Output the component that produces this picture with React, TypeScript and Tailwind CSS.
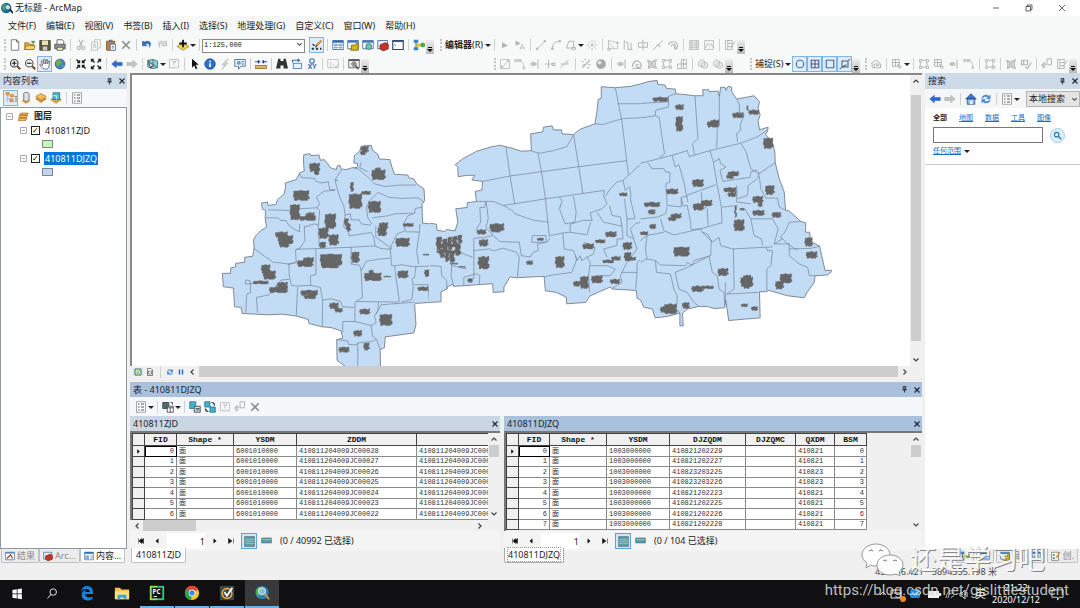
import type { ReactNode } from 'react';
import clsx from 'clsx';

const G = '#b4b4b4';
const K = '#444';
const B = '#2f6fb8';

const icons: Record<string, ReactNode> = {
  new: <path d="M3 1h7l3 3v11H3zM10 1v3h3" fill="#fff" stroke="#555" />,
  open: <><path d="M1 5h5l1 2h6v7H1z" fill="#d9a93a" stroke="#8a6a1c" /><path d="M3 9h12l-2 5H1z" fill="#f7d777" stroke="#8a6a1c" /><path d="M9 3h4l-1-2 3 3-3 2" fill="#3c8a3c" /></>,
  save: <><path d="M1 2h14v13H1z" fill="#5a5a3c" stroke="#3c3c28" /><path d="M4 2h8v6H4z" fill="#e9e3b4" /><path d="M5 10h6v5H5z" fill="#ccc" /></>,
  print: <><path d="M4 7V1h7l2 2v4" fill="#fff" stroke={K} /><path d="M1 7h14v6H1z" fill="#8f9499" stroke={K} /><path d="M4 11h8v4H4z" fill="#f3f0c0" stroke={K} /></>,
  cut: <path d="M5 1l5 9M11 1L6 10M5 10a2 2 0 1 0 .1 4 2 2 0 0 0 0-4M11 10a2 2 0 1 0 .1 4 2 2 0 0 0 0-4" fill="none" stroke={G} strokeWidth="1.5" />,
  copy: <path d="M2 4h8v11H2zM6 4V1h8v11h-4M4 7h4M4 9h4M4 11h4" fill="none" stroke={G} />,
  paste: <><path d="M2 3h11v12H2z" fill="#b5814a" stroke="#765026" /><path d="M5 1h5v3H5z" fill="#777" /><path d="M7 7h7v8H7z" fill="#fff" stroke="#3f6aa5" /><path d="M9 10h3M9 12h3" stroke="#3f6aa5" /></>,
  del: <path d="M3 3l10 10M13 3L3 13" stroke="#8d8d8d" strokeWidth="2.2" />,
  undo: <path d="M2 3v6h6L6 7c3-2 6-1 5 4 4-6 0-10-6-7z" fill={B} stroke={B} />,
  redo: <path d="M14 3v6H8l2-2c-3-2-6-1-5 4-4-6 0-10 6-7z" fill="#ddd" stroke={G} />,
  add: <><path d="M8 5l8 5-8 5-8-5z" fill="#efd45b" stroke="#9a8328" /><path d="M8 1v10M3 6h10" stroke="#111" strokeWidth="2.4" /></>,
  edit: <><path d="M1 13h13" stroke="#333" strokeWidth="2.500" strokeDasharray="3 2.500" /><path d="M2 7l3 2" stroke="#222" fill="none" strokeWidth="1.5" /><path d="M7 9l7-7" stroke="#d58d34" strokeWidth="2.6" /><path d="M6 11l2-3" stroke="#333" strokeWidth="1.500" /></>,
  table: <><path d="M1 2h14v12H1z" fill="#fff" stroke="#2f568c" /><path d="M1 2h14v3H1z" fill="#2f6fb8" /><path d="M3 7h4v2H3zM9 7h4v2H9zM3 11h4v1H3zM9 11h4v1H9z" fill="#8fb4de" stroke="#6f9bd1" /></>,
  catalog: <><path d="M1 2h14v11H1z" fill="#fff" stroke="#2f568c" /><path d="M1 2h14v3H1z" fill="#4a7bbd" /><path d="M6 8h6v-2h3v9H5z" fill="#d6b422" stroke="#6f5c10" /></>,
  find: <><path d="M1 2h14v11H1z" fill="#fff" stroke="#2f568c" /><path d="M1 2h14v3H1z" fill="#4a7bbd" /><circle cx="9" cy="10" r="4" fill="#6fc0b5" stroke="#2b7469" /></>,
  toolbox: <><path d="M1 2h13v11H1z" fill="#e8eefc" stroke="#2f568c" /><path d="M4 8l7-3 4 2v6l-7 3-4-3z" fill="#c23426" stroke="#7e1b12" /></>,
  python: <><path d="M1 2h14v12H1z" fill="#fff" stroke="#333c66" strokeWidth="1.5" /><path d="M1 3h14" stroke="#3c5aa0" strokeWidth="2" /><path d="M3 7l2 2" stroke="#333" /></>,
  model: <><path d="M4 4v8M4 8h8" stroke="#333" /><rect x="1" y="1" width="6" height="4" fill="#2f87c7" /><rect x="1" y="11" width="6" height="4" fill="#2f87c7" /><circle cx="7" cy="8" r="2.5" fill="#e2c52e" /><rect x="10" y="5" width="6" height="6" rx="2" fill="#56a646" /></>,
  zoomin: <><circle cx="7" cy="7" r="5" fill="#f4f8fb" stroke="#333" strokeWidth="1.5" /><path d="M11 11l4 4" stroke="#7a4a1a" strokeWidth="2.5" /><path d="M4 7h6M7 4v6" stroke="#222" strokeWidth="1.6" /></>,
  zoomout: <><circle cx="7" cy="7" r="5" fill="#f4f8fb" stroke="#555" strokeWidth="1.5" /><path d="M11 11l4 4" stroke="#7a4a1a" strokeWidth="2.5" /><path d="M4 7h6" stroke="#222" strokeWidth="1.6" /></>,
  pan: <path d="M5 14L1 9l1-1 3 2L3 4l1.500-.5L7 8 6 2l2-.5L9 8l1-6 1.500.5L11.500 8 13 4l1.500.5L13 12l-2 3z" fill="#fff" stroke="#555" />,
  globe: <><circle cx="8" cy="8" r="6.500" fill="#3c86c8" stroke="#27517c" /><path d="M4 3c4-2 7 1 6 4s-4 1-4 5c-3-2-5-6-2-9M11 9l3 1-3 4z" fill="#6fae4c" /></>,
  shrink: <path d="M2 2l4 4M6 3v3H3M14 2l-4 4M10 3v3h3M2 14l4-4M3 10h3v3M14 14l-4-4M13 10h-3v3" stroke="#222" fill="none" strokeWidth="1.8" />,
  grow: <path d="M6 6L2 2M2 5V2h3M10 6l4-4M11 2h3v3M6 10l-4 4M2 11v3h3M10 10l4 4M14 11v3h-3" stroke="#222" fill="none" strokeWidth="1.8" />,
  back: <path d="M1 8l6-5v3h8v4H7v3z" fill="#2c6cd0" stroke="#1b4796" strokeWidth=".6" />,
  fwd: <path d="M15 8L9 3v3H1v4h8v3z" fill="#c2c2c2" stroke="#a5a5a5" strokeWidth=".6" />,
  selfeat: <><path d="M1 3l7-1 6 2v9l-6 1-7-2z" fill="#8fd0dd" stroke="#36606b" /><path d="M8 2v6l6 5M1 8h7" stroke="#36606b" fill="none" /><path d="M2 4l7 7-3 0-1 3z" fill="#fff" stroke="#222" /></>,
  clearsel: <path d="M2 2h12v11H2zM5 5h6M8 5v5M11 3l-3 4" fill="none" stroke={G} />,
  pointer: <path d="M4 1l9 8H9l2 5-2 1-2-5-3 3z" fill="#111" />,
  info: <><circle cx="8" cy="8" r="7" fill="#2a6fc9" stroke="#1b4a8b" /><path d="M8 7v5M8 3.500v2" stroke="#fff" strokeWidth="2.2" /></>,
  flash: <path d="M12 1L4 9h4l-4 6 8-8H8z" fill="#ddd" stroke={G} />,
  popup: <><path d="M1 2h14v9H9l-3 4v-4H1z" fill="#eaf3fc" stroke="#36597f" /><path d="M5 5h3v3H5zM10 5h3M10 8h3" fill="none" stroke={B} strokeWidth="1.3" /></>,
  measure: <><path d="M0 10h16v4H0z" fill="#ddb46a" stroke="#8b6626" /><path d="M0 5h6M4 3l2 2-2 2M16 5h-6M12 3l-2 2 2 2" fill="none" stroke="#26509a" strokeWidth="1.600" /></>,
  binoc: <path d="M3 1h3v3h4V1h3l3 13h-6v-4H6v4H0z" fill="#333" />,
  route: <><rect x="3" y="7" width="11" height="7" fill="#e7f1fa" stroke={B} /><path d="M2 6V3h9l-2-2M11 3L9 5" fill="none" stroke={B} strokeWidth="1.500" /></>,
  xy: <><circle cx="8" cy="4" r="3" fill="#fff" stroke={B} strokeWidth="1.500" /><text x="8" y="15" fontSize="9" fontWeight="700" fill={B} textAnchor="middle">XY</text></>,
  clock: <path d="M1 2h14v11H1zM5 5v8M8 8l4 5 3-5" fill="none" stroke={G} />,
  viewer: <><path d="M1 2h14v11H1z" fill="#f5f5f5" stroke="#444" /><path d="M1 3h14" stroke="#555" strokeWidth="2" /><circle cx="8" cy="8" r="3" fill="#fff" stroke="#333" /><path d="M8 6v4M6 8h4" stroke="#333" /><path d="M10 10l4 5" stroke="#555" strokeWidth="2" /></>,
  gTri: <path d="M4 4l8 5-8 3z" fill={G} />,
  gTriA: <><path d="M2 2l7 4-7 3z" fill={G} /><path d="M8 14l3-7 3 7M9 12h4" stroke={G} fill="none" /></>,
  gLine: <path d="M3 13L13 3M2 12h2v2H2zM12 2h2v2h-2z" fill={G} stroke={G} />,
  gArc: <path d="M3 14C3 7 6 3 13 3M2 12h2v2H2zM12 2h2v2h-2z" fill="none" stroke={G} strokeWidth="1.3" />,
  gTrap: <path d="M2 12L5 3h7l-1 9zM10 11h4v3h-4z" fill="none" stroke={G} strokeWidth="1.3" />,
  gStar: <path d="M8 1v14M1 8h14M3 3l10 10M13 3L3 13" stroke={G} strokeDasharray="4 1.500" />,
  gReshape: <path d="M2 2v11h12V5zM2 5l8 8M1 12h3v3H1zM13 4h2v2h-2z" fill="none" stroke={G} />,
  gCutp: <path d="M3 2v12M3 3l5 2v9M12 5v9M8 14h6" fill="none" stroke={G} strokeWidth="1.300" />,
  gSplit: <path d="M2 5h12v6H2zM8 1v14" fill="none" stroke={G} strokeWidth="1.300" />,
  gSlash: <path d="M2 14L14 2M6 8h4v3" fill="none" stroke={G} strokeWidth="1.300" />,
  gRotate: <path d="M2 8a6 5 0 1 1 9 5M14 13h-4M10 13V9M6 10a2.500 2 0 1 1 4 1" fill="none" stroke={G} strokeWidth="1.500" />,
  gGrid: <path d="M2 2h12v12H2zM2 5h12M2 8h12M2 11h12M5 2v12M11 2v12" fill="#eee" stroke={G} />,
  gMount: <path d="M2 2h12v12H2zM3 12l3-6 3 3 2-3 3 6" fill="#f4f4f4" stroke={G} />,
  gForm: <path d="M2 2h9v12H2zM5 2v12M5 6h6M5 10h6M9 12l6-9" fill="none" stroke={G} strokeWidth="1.200" />,
  gBoxLine: <path d="M2 2h12v12H2zM4 12l8-8M3 11h2v2H3zM11 3h2v2h-2z" fill="none" stroke={G} />,
  gCorner: <path d="M2 3h5c4 0 6 4 6 10M1 2h3v3H1zM6 2h3v3H6zM12 12h2v2h-2z" fill="none" stroke={G} />,
  gExt: <path d="M1 8h8M12 2v12M9 6v4M4 6h3v4H4z" fill="none" stroke={G} strokeWidth="1.300" />,
  gPlus: <path d="M6 2v12M1 8h12M11 7h4v3h-4z" fill="none" stroke={G} strokeWidth="1.200" />,
  gBranch: <path d="M2 13L13 2M2 8h10M10 6l3 2" fill="none" stroke={G} strokeWidth="1.200" />,
  gDots: <path d="M3 13L13 3M2 5h3M6 2h2M11 9h3M9 13h3M4 9h2" stroke={G} strokeWidth="1.500" />,
  gBall: <><circle cx="8" cy="8" r="6.500" fill="#a9a9a9" /><circle cx="6" cy="6" r="2.500" fill="#e5e5e5" /></>,
  gCurl: <path d="M2 12c0-7 6-11 10-6s-1 8-4 6 0-5 2-3M2 14h12" fill="none" stroke={G} strokeWidth="1.600" />,
  gPoly: <path d="M2 3l5 2 7-3-2 6 2 6-6-2-5 2 1-6zM4 4l8 9M12 4l-8 8" fill="#ddd" stroke={G} strokeWidth="1.300" />,
  gBoxes: <path d="M2 2h3v3H2zM11 2h3v3h-3zM2 11h3v3H2zM11 11h3v3h-3zM5 3h6M5 12h6M3 5v6M12 5v6" fill="none" stroke={G} strokeWidth="1.200" />,
  gTiles: <path d="M7 2h7v6H7zM2 8h12v6H2zM7 8v6M10 2v12" fill="none" stroke={G} strokeWidth="1.200" />,
  gUnion: <path d="M2 5l4-3 4 2v6l-4 2-4-2zM6 8l4-3 4 2v5l-4 2-4-2z" fill="#e8e8e8" stroke={G} />,
  gHouse: <path d="M1 8l6-5 6 3M3 7v6h11V8H6v5M8 10h4" fill="none" stroke={G} strokeWidth="1.300" />,
  gTopo: <path d="M2 2h9v9H2zM2 6h9M6 2v9M9 8l5 4-3 2z" fill="none" stroke={G} strokeWidth="1.300" />,
  gCheck: <path d="M2 3h8v6H2zM5 3v6M7 12l3 2 5-8" fill="none" stroke={G} strokeWidth="1.600" />,
  sCircle: <circle cx="8" cy="8" r="5" fill="none" stroke="#4b6b94" strokeWidth="1.500" />,
  sGrid: <path d="M3 3h10v10H3zM8 3v10M3 8h10" fill="none" stroke="#4b5f80" strokeWidth="1.500" />,
  sBox: <path d="M3 3h10v10H3z" fill="none" stroke="#4b6b94" strokeWidth="1.500" />,
  sEdge: <path d="M4 4h8v8H4zM1 15l3-3M12 4l3-3M4 12l6-3" fill="none" stroke="#4b5f80" strokeWidth="1.400" />,
  listOrder: <><path d="M3 3v10M3 5h5M3 9h5M7 13h5" stroke="#aaa" fill="none" /><path d="M1 1l4-1 1 3-4 1zM7 4l4-1 1 3-4 1zM6 10l4-1 1 3-4 1z" fill="#e3a45a" stroke="#c58438" /><path d="M13 6h3M13 9h3M13 12h3" stroke="#555" /></>,
  listSource: <><path d="M2 12l6-4 6 4-6 4z" fill="#e9a63d" /><path d="M5 2c0-2 7-2 7 0v9c0 2-7 2-7 0z" fill="#dde1e6" stroke="#555" /></>,
  listVis: <><path d="M1 9l7-4 7 4-7 5z" fill="#d8963a" stroke="#b07a24" /><path d="M1 6l7-4 7 4-7 5z" fill="#f3bd63" stroke="#b07a24" /></>,
  listSel: <><path d="M1 10l7-3 7 3-7 5z" fill="#e9a63d" stroke="#b07a24" /><path d="M4 1h9v9H4z" fill="#42b7d0" stroke="#27687b" /><path d="M4 5h5v5" stroke="#fff" fill="none" /></>,
  options: <><path d="M2 1h12v14H2z" fill="#fff" stroke="#888" /><path d="M4 4h2M4 8h2M4 12h2M8 4h4M8 8h4M8 12h4" stroke="#555" strokeWidth="1.500" /></>,
  layers: <path d="M4 3h11l-2 3H2zM3 6h11l-2 4H1zM2 10h11l-2 4H0z" fill="#f0b557" stroke="#a8702a" />,
  home: <><path d="M1 8l7-7 7 7z" fill="#3c78cc" stroke="#1c4685" /><path d="M3 8h10v7H3z" fill="#8fb9ea" stroke="#1c4685" /><path d="M7 10h3v5H7z" fill="#fff" /></>,
  refresh: <path d="M2 7c1-5 7-6 10-3l2-2v6H8l2-2C8 4 5 5 4 7zM14 9c-1 5-7 6-10 3l-2 2V8h6l-2 2c2 2 5 1 6-1z" fill="#4b90d8" />,
  related: <><path d="M1 2h8v8H1z" fill="#4a6d74" stroke="#333" /><path d="M7 7h8v8H7z" fill="#fff" stroke="#333" /><path d="M7 9h8M11 9v6M11 2h3v3" stroke="#333" fill="none" /></>,
  selby: <><path d="M1 1h8v9H1z" fill="#3fb4cf" stroke="#276a80" /><path d="M7 7h8v8H7z" fill="#cfe2ea" stroke="#333" /><path d="M9 10h5M9 12h5" stroke="#333" /></>,
  swsel: <><path d="M1 1h7v7H1zM8 8h7v7H8z" fill="#3fb4cf" stroke="#276a80" /><path d="M10 2c3 0 4 1 4 4M2 10c0 3 1 4 4 4" stroke="#222" fill="none" strokeWidth="1.500" /></>,
  gZoomSel: <path d="M8 1h6v8H8zM6 7a3 3 0 1 0 .1 5M1 9h6M4 6v6M2 14l2-2" fill="none" stroke={G} strokeWidth="1.300" />,
  pin: <path d="M5 1h6v7H5zM9 1v7M3 9h10M8 9v6" fill="none" stroke="#1c2733" strokeWidth="1.900" />,
  close: <path d="M3 3l10 10M13 3L3 13" stroke="#1c2733" strokeWidth="2.300" />,
  thinClose: <path d="M2 2l12 12M14 2L2 14" stroke="#222" strokeWidth="1.400" />,
  min: <path d="M2 8h12" stroke="#222" strokeWidth="1.400" />,
  max: <path d="M2 5h9v9H2zM5 5V2h9v9h-3" fill="none" stroke="#222" strokeWidth="1.400" />,
  up: <path d="M3 11l5-5 5 5" fill="none" stroke="#444" strokeWidth="2.400" />,
  down: <path d="M3 5l5 5 5-5" fill="none" stroke="#444" strokeWidth="2.400" />,
  left: <path d="M11 3L6 8l5 5" fill="none" stroke="#444" strokeWidth="2.400" />,
  right: <path d="M5 3l5 5-5 5" fill="none" stroke="#444" strokeWidth="2.400" />,
  first: <path d="M3 3v10M13 3v10L6 8zM9 3v10L4 8z" fill="#111" stroke="#111" />,
  prev: <path d="M11 3v10L5 8z" fill="#111" />,
  next: <path d="M5 3v10l6-5z" fill="#111" />,
  last: <path d="M13 3v10M3 3v10l7-5z" fill="#111" stroke="#111" />,
  allrec: <><path d="M1 1h14v14H1z" fill="#57a0a8" stroke="#4d5e63" /><path d="M1 5h14M1 8h14M1 11h14" stroke="#a9cdd2" /></>,
  selrec: <><path d="M1 3h14v7H1z" fill="#4fa3ae" stroke="#4d5e63" /><path d="M1 5h14" stroke="#a9cdd2" /></>,
  dataview: <><path d="M2 2h12v12H2z" fill="#cfe5b8" stroke="#2f5a3c" strokeWidth="1.500" /><path d="M5 8l2 3 4-6" fill="none" stroke="#3c7a3c" /></>,
  layoutview: <path d="M3 1h7l3 3v11H3zM5 6h6v6H5z" fill="#fff" stroke="#444" strokeWidth="1.300" />,
  pause: <path d="M5 3v10M11 3v10" stroke={B} strokeWidth="3" />,
  results: <><path d="M1 2h14v12H1z" fill="#fff" stroke="#2f568c" /><path d="M1 3h14" stroke="#4a7bbd" strokeWidth="2" /><path d="M3 12l6-6 3 6" stroke="#9c4a2c" fill="none" strokeWidth="2" /></>,
  contents: <><path d="M1 2h14v12H1z" fill="#fff" stroke="#2f568c" /><path d="M1 3h14" stroke="#2f6fb8" strokeWidth="3" /><path d="M2 7h6v6H2z" fill="#79aee6" /><path d="M10 8h4M10 11h4" stroke="#555" /></>,
  create: <><path d="M1 2h11v13H1z" fill="#fff" stroke="#555" /><path d="M3 5h3v3H3z" fill="#5aa05a" /><path d="M3 10h3v3H3z" fill="#4a7bbd" /><path d="M8 11l6-9" stroke="#d58d34" strokeWidth="2.400" /></>,
  search: <><circle cx="6.500" cy="6.500" r="4" fill="none" stroke="#2779b8" strokeWidth="2" /><path d="M9.500 9.500l5 5" stroke="#2779b8" strokeWidth="2.400" /></>,
};

const Icon = ({ name, className = 'w-[12px] h-[12px]' }: { name: string; className?: string }) => (
  <svg viewBox="0 0 16 16" className={clsx('shrink-0', className)} aria-hidden="true">{icons[name]}</svg>
);

const Tool = ({ name, active }: { name: string; active?: boolean }) => (
  <button
    aria-label={name}
    className={clsx('flex h-[16px] w-[15px] shrink-0 items-center justify-center', active && 'border border-[#7db7ea] bg-[#dcecfa]')}
  >
    <Icon name={name} />
  </button>
);

const Sep = () => <span className="mx-[2px] h-3 w-[2px] shrink-0 border-r border-[#d0d0d0]" />;
const Grip = () => <span className="mx-px h-3 w-[2px] shrink-0 border-l-2 border-dotted border-[#c4c4c4]" />;
const Caret = () => (
  <svg viewBox="0 0 6 6" className="h-[6px] w-[6px] shrink-0" aria-hidden="true"><path d="M0 2h6L3 5z" fill="#222" /></svg>
);
const More = () => (
  <button aria-label="more" className="flex h-[14px] w-2 shrink-0 items-end justify-center self-end bg-gradient-to-b from-[#eeeeee] to-[#b9b9b9] pb-px">
    <svg viewBox="0 0 6 6" className="h-[6px] w-[6px]"><path d="M1 0h4v1H1zM0 2h6L3 5z" fill="#111" /></svg>
  </button>
);

// '|' separator, 'v' drop-down caret, '*name' pressed button
const Tools = ({ items }: { items: string }) => (
  <>
    {items.split(' ').map((it, idx) => {
      if (it === '|') return <Sep key={idx} />;
      if (it === 'v') return <Caret key={idx} />;
      return <Tool key={idx} name={it.replace('*', '')} active={it.startsWith('*')} />;
    })}
  </>
);

const menus = ['文件(F)', '编辑(E)', '视图(V)', '书签(B)', '插入(I)', '选择(S)', '地理处理(G)', '自定义(C)', '窗口(W)', '帮助(H)'];

// settlement block with small notches along its sides
const blob = ([x, y, w, h]: number[]) => {
  const n = Math.min(2 + ((x + y) % 2), h * 0.15);
  const m = Math.min(3 + (x % 3), h * 0.2);
  const r = x + w;
  const b = y + h;
  return `M${x} ${y + n}H${x + w * 0.35}V${y}H${x + w * 0.6}V${y + n}H${r - m}V${y}H${r}V${y + h * 0.35}h${-n}V${y + h * 0.6}H${r + 1}V${b - m}H${r - m}V${b}H${x + w * 0.45}v${-n}H${x + w * 0.25}V${b}H${x + n}V${y + h * 0.65}H${x - 1}V${y + h * 0.4}h${n}z`;
};

const regions = [
  {
    offset: 'translate(252 165)',
    fill: 'M648 280V515L604 518 600 520 604 580 598 606 512 618 510 650 497 656 498 706H392L368 688 367 626 385 622 380 600 350 590 324 588 284 578 282 566 248 556 205 550 165 552 84 548 82 530 62 528 58 472 28 468 25 428 50 428 50 412 65 408 65 398 92 395 92 380 116 377 120 350 118 328 126 315 140 300 157 290 153 262 155 240 145 236 142 218 160 215 162 225 185 222 190 208 210 190 214 170 213 158 232 152 246 148 256 128 270 122 268 98 268 74 287 70 290 76 314 74 318 90 330 88 340 100 348 112 366 118 368 108 376 104 380 116 395 118 414 112 428 112 430 100 418 98 420 76 436 62 440 48 470 45 474 60 490 72 494 86 526 88 532 110 540 132 580 134 582 142 598 146 606 160 628 176 630 210 622 222 624 278z',
    edge: 'M645 515L604 518 600 520 604 580 598 606 512 618 510 650 497 656 498 706M392 706L368 688 367 626 385 622 380 600 350 590 324 588 284 578 282 566 248 556 205 550 165 552 84 548 82 530 62 528 58 472 28 468 25 428 50 428 50 412 65 408 65 398 92 395 92 380 116 377 120 350 118 328 126 315 140 300 157 290 153 262 155 240 145 236 142 218 160 215 162 225 185 222 190 208 210 190 214 170 213 158 232 152 246 148 256 128 270 122 268 98 268 74 287 70 290 76 314 74 318 90 330 88 340 100 348 112 366 118 368 108 376 104 380 116 395 118 414 112 428 112 430 100 418 98 420 76 436 62 440 48 470 45 474 60 490 72 494 86 526 88 532 110 540 132 580 134 582 142 598 146 606 160 628 176 630 210 622 222 624 278 645 280',
    lines: 'M256 130L262 142 300 144 304 152 320 158 342 154 346 178 362 178M155 262L190 262 200 270 215 270 224 284 240 296 256 304V280M162 238L224 240 232 236 308 232 316 220 306 200 330 182 362 180M362 150H370L362 148 382 118M362 150L370 180 376 200 388 225 392 250M414 112L432 116 460 140 480 160 510 168 560 164 604 164M440 96L436 112 460 124M490 186L505 192 520 200 560 204 610 202 628 215M490 186L466 210 456 230 460 262 472 280M472 262L520 256 540 250 600 248 602 234 622 230M392 250L388 290 402 300 404 316 470 306 478 320 482 346M392 254L408 250 410 268 434 268 440 280 470 284M308 232L316 240 312 290 315 350M270 290L300 280 312 284M270 286L272 330 258 352M118 352L150 376 175 394 222 400 246 396 244 358 258 352M246 356L310 354 410 350 480 346 500 354 530 356M305 356V432L288 436 290 464 246 466 232 464 225 435 224 398M530 356V345L548 310 572 300 568 278 580 256 600 248M484 286V320L526 350 530 384 530 405 540 405M572 304H600L614 305 616 280M614 305L606 360 612 400M410 350V400L436 404 440 420 446 410 455 392 490 386 528 382M440 420L444 500 425 512 550 514 554 512 540 406 560 402 596 408 680 405 684 438 696 446 694 476M604 406L600 440 592 444 596 464 592 506 560 514M600 462H640L644 512M250 470L246 556M290 464L318 470 325 508 324 588M325 508L350 504 380 512 384 528 420 530M422 513L421 572 470 584 472 600M492 513L490 540 480 555 485 575 470 584M385 604V572L425 572M472 600L474 616 486 625 497 656M367 626L400 630 402 640 425 642 430 636 470 632 486 625M430 636V704M95 546L98 490 110 485 108 450 95 448 94 460 120 458M130 545L127 500 165 492 200 448 225 446M485 550L500 522 600 514M246 394L224 402',
    blobs: [[440, 47, 22, 20], [438, 62, 14, 12], [286, 98, 30, 26], [300, 120, 14, 14], [472, 118, 40, 30], [482, 112, 16, 10], [408, 156, 9, 28], [404, 190, 38, 44], [442, 182, 26, 10], [238, 180, 46, 30], [228, 222, 28, 46], [256, 256, 48, 14], [276, 246, 24, 14], [462, 212, 36, 34], [332, 250, 32, 44], [184, 304, 36, 16], [192, 314, 44, 26], [196, 336, 28, 14], [314, 292, 28, 32], [316, 334, 18, 18], [344, 312, 28, 32], [390, 264, 12, 22], [396, 280, 12, 22], [494, 276, 26, 20], [490, 290, 26, 26], [566, 278, 30, 10], [544, 322, 40, 26], [318, 370, 64, 34], [322, 400, 50, 12], [412, 364, 22, 32], [268, 380, 30, 14], [250, 388, 46, 20], [142, 402, 26, 26], [148, 420, 36, 26], [118, 450, 44, 10], [190, 454, 30, 18], [166, 468, 54, 18], [450, 426, 50, 24], [464, 418, 12, 12], [550, 420, 30, 22], [630, 416, 34, 22], [610, 468, 30, 12], [260, 478, 50, 16], [270, 492, 34, 12], [346, 516, 26, 18], [362, 532, 22, 12], [436, 534, 30, 16], [496, 550, 36, 34], [418, 598, 24, 18], [374, 648, 30, 16], [448, 636, 16, 22], [508, 436, 20, 3], [626, 370, 20, 4]],
  },
  {
    offset: 'translate(897 0)',
    fill: 'M-2 443L20 446 22 464 44 468 50 462 76 466 84 440 78 400 112 396 112 382 140 378 136 348 156 344 158 318 126 314 135 300 112 300 85 304 84 274 76 268 100 250 140 228 180 216 210 210 250 220 275 228 304 226 302 176 338 170 340 156 366 152 370 164 394 164 396 176 430 178 450 162 494 146 500 110 504 72 513 70 513 35 555 38 600 34 632 26V672L620 668 618 644 546 640 540 634 480 660 466 680 410 684 408 664 378 650 346 645 342 602 260 606 240 604 222 634 222 648 190 650 188 624 130 628 72 632 68 626 52 634 52 640 34 648 34 678 -2 680z',
    edge: 'M0 443L20 446 22 464 44 468 50 462 76 466 84 440 78 400 112 396 112 382 140 378 136 348 156 344 158 318 126 314 135 300 112 300 85 304 84 274 76 268 100 250 140 228 180 216 210 210 250 220 275 228 304 226 302 176 338 170 340 156 366 152 370 164 394 164 396 176 430 178 450 162 494 146 500 110 504 72 513 70 513 35 555 38 600 34 630 27M630 672L620 668 618 644 546 640 540 634 480 660 466 680 410 684 408 664 378 650 346 645 342 602 260 606 240 604 222 634 222 648 190 650 188 624 130 628 72 632 68 626 52 634 52 640 34 648 34 678 0 680',
    lines: 'M228 215L240 300 254 385M158 318L240 302 446 274 590 256M324 234L336 300 346 370 358 485M430 178L446 276 458 355M555 38L575 140 594 298M304 228L330 234 370 226 410 214 430 180M494 146L520 148 556 136 580 130 630 128M562 86H630M140 378L190 378 220 390 254 385 348 370 522 345M220 390L245 404 255 415 310 434 355 440M522 345L520 360 530 385 515 400 480 412 486 435 460 434 420 446M524 364L540 340 560 320 578 315 600 295 620 275 630 270M388 366L396 375 388 400 405 445 434 440 438 410 430 362M150 396H164L168 378 172 400 175 430 168 455 190 480 210 498 268 500 274 540 300 544 310 530 325 525 322 505 350 500 360 488M150 396L152 440 140 460 150 478M132 488L165 486 188 480M132 488V610M130 525L180 520 190 526 220 518 260 530 268 545 262 606M307 480H348V500H305zM360 480L400 472 420 470V446M398 472L402 520 430 525 440 550 425 590 355 600 342 605M420 470L470 478 478 450 482 440M60 540L66 570 64 600 72 632M66 570L110 580M0 570L34 572 36 600 50 612 52 640M102 628V605L140 594 150 600 148 628M90 530L128 545M435 540L440 555 450 540 454 555 470 545 480 560 475 600 478 650M470 545L490 535 494 515 460 500M500 410L520 440 575 452 578 490 560 490V510L520 520 530 545M538 390L545 420 570 424 575 452M578 315L585 345 598 334 602 360 600 370 614 430 590 430 582 370M590 430V480L610 490 600 460 615 445 630 440M610 490L620 520 605 540 590 560 570 600 575 620 545 638M500 600L540 600 555 580 530 570 480 570M575 590L620 590 616 640M620 590V560L630 552',
    blobs: [[180, 444, 42, 22], [186, 462, 24, 8], [142, 462, 26, 14], [148, 492, 26, 20], [145, 542, 32, 38], [322, 487, 18, 8], [290, 555, 18, 12], [376, 542, 26, 34], [458, 504, 32, 16], [496, 492, 28, 10], [526, 468, 32, 16], [578, 500, 26, 22], [518, 552, 32, 10], [544, 542, 26, 12], [582, 530, 20, 26], [590, 544, 26, 10], [430, 616, 20, 16], [450, 602, 24, 36], [484, 600, 32, 22], [540, 610, 28, 14], [568, 352, 22, 10], [114, 608, 14, 12], [20, 484, 16, 40], [38, 490, 14, 40], [54, 484, 12, 40], [68, 482, 14, 30], [84, 478, 12, 26], [30, 520, 14, 26], [46, 530, 12, 28], [60, 526, 14, 34], [76, 508, 16, 32], [26, 504, 64, 10], [22, 524, 66, 8], [62, 562, 22, 4], [88, 572, 18, 3]],
  },
  {
    offset: 'translate(1527 0)',
    fill: 'M0 27L22 20 50 16 52 28 74 30 78 40 104 42 106 56 130 58 160 62 188 62 186 44 204 44 206 50 232 48 236 64 240 36 254 38 256 46 262 34 272 36 274 52 288 72 340 62 356 80 352 100 358 120 352 136 356 164 382 156 380 168 374 178 394 200 402 230 403 262 415 310 430 350 434 404 444 406 480 438 494 442 494 470 506 470 508 490 514 500 536 512 542 540 552 584 572 584 568 592 558 598 522 600 520 620 498 650 490 666 440 660 384 644 374 648 356 648 358 726 264 734 255 672 252 696 220 698 200 692 174 692 140 700 126 712 128 750 118 750 118 712 80 722 44 726 36 700 10 694 0 672z',
    edge: 'M0 27L22 20 50 16 52 28 74 30 78 40 104 42 106 56 130 58 160 62 188 62 186 44 204 44 206 50 232 48 236 64 240 36 254 38 256 46 262 34 272 36 274 52 288 72 340 62 356 80 352 100 358 120 352 136 356 164 382 156 380 168 374 178 394 200 402 230 403 262 415 310 430 350 434 404 444 406 480 438 494 442 494 470 506 470 508 490 514 500 536 512 542 540 552 584 572 584 568 592 558 598 522 600 520 620 498 650 490 666 440 660 384 644 374 648 356 648 358 726 264 734 255 672 252 696 220 698 200 692 174 692 140 700 126 712 128 750 118 750 118 712 80 722 44 726 36 700 10 694 0 672',
    lines: 'M0 85L84 80M106 56L84 64V96L46 105 44 122 0 128M44 122L56 126 72 236 58 246M0 264L95 240 140 226 146 244 208 226 300 204 350 185 378 165M163 62L172 190 156 205 162 240M236 64V150L230 160 228 218M288 72L296 90 296 110 310 120 298 150 300 165 288 175 290 200M208 226L218 260 230 330 242 395 244 445M300 204L316 230 330 280 355 295 403 262M220 260L236 250 240 265 256 275 238 285 246 318 328 306 330 290 350 284M95 240L104 275 115 268 130 320 138 360 226 328M138 360L142 380M22 262L35 280 70 280 76 290 88 290V320L76 325 80 390 122 394V366L140 362M0 430L50 425 75 415 80 395M122 366L128 392 140 390 150 440 152 462 180 460 242 442M182 350L184 380 200 400 202 450M60 430L70 465 100 478 180 460 185 470 200 475 212 495 210 540M0 495L20 480 70 470M20 480L15 520 20 550 0 560M20 550L45 555 60 568 135 570 140 560 155 570 160 555 210 540M45 556L48 590 90 595 100 640 110 660 108 700 118 712M104 590L115 640 140 650 160 680 175 692M104 590L130 580 205 542M205 540L215 590 230 600 235 640 250 650 252 690M185 470L215 500 235 485 240 510 275 520 395 514M278 520L280 640 258 655M254 620V672M258 655L352 650M244 395L290 390M312 400L330 430 340 480 362 490 365 510M290 370L320 360 322 330 350 310 355 290M288 330V380L330 385M355 300L360 340 375 368 410 368 415 395 434 404M330 430L395 430 412 460 400 505M400 505L425 490 418 484 432 470 445 440 480 438M375 515L380 525 395 525 390 570 378 580V645M400 505L445 505 445 540 475 565 500 575 505 600 522 600M445 520L510 518 536 512M420 485L440 505 470 524',
    blobs: [[38, 66, 44, 13], [105, 88, 24, 16], [106, 124, 20, 44], [200, 138, 34, 18], [210, 134, 24, 14], [276, 112, 32, 16], [324, 104, 30, 14], [318, 92, 4, 14], [368, 188, 28, 32], [262, 288, 32, 14], [258, 298, 20, 12], [156, 312, 32, 22], [78, 340, 34, 16], [12, 380, 46, 14], [24, 402, 20, 14], [158, 384, 32, 20], [182, 374, 32, 18], [92, 414, 30, 14], [84, 424, 22, 12], [250, 336, 36, 14], [262, 350, 24, 14], [336, 362, 30, 20], [352, 382, 12, 12], [374, 330, 26, 28], [336, 404, 34, 16], [394, 410, 26, 16], [280, 432, 30, 34], [282, 392, 5, 34], [100, 514, 46, 28], [492, 486, 22, 26], [496, 528, 32, 20], [232, 578, 30, 22], [154, 630, 34, 18], [186, 630, 32, 9], [300, 604, 36, 28], [308, 598, 22, 40], [418, 594, 34, 28], [404, 616, 24, 24], [72, 684, 36, 30], [60, 692, 20, 18], [126, 680, 20, 18], [302, 684, 18, 9], [332, 692, 18, 12], [0, 468, 22, 10], [28, 446, 18, 14], [298, 398, 12, 6]],
  },
];

const ParcelMap = () => (
  <svg viewBox="0 0 2340 870" className="block h-full w-full" preserveAspectRatio="xMidYMid slice" role="img" aria-label="410811DJZQ">
    {regions.map((r, idx) => (
      <g key={idx} transform={r.offset}>
        <path d={r.fill} fill="#c3dcf6" />
        <path d={r.edge} fill="none" stroke="#6d7681" strokeWidth="2.500" />
        <path d={r.lines} fill="none" stroke="#77889c" strokeWidth="2.200" />
        <path d={r.blobs.map(blob).join('')} fill="#666" stroke="#666" strokeWidth="1" />
      </g>
    ))}
  </svg>
);

type Column = { label: string; width: string; right?: boolean };

const RecordTable = ({ name, columns, rows }: { name: string; columns: Column[]; rows: string[][] }) => (
  <table aria-label={name} className="w-max table-fixed border-collapse bg-white font-['Liberation_Mono','Noto_Sans_CJK_SC',monospace] text-[7px] leading-[9px] text-[#333]">
    <thead>
      <tr className="h-[12px] bg-[#f0f0f0] text-[8px] text-[#111]">
        <th className="w-[12px] border border-[#444]" />
        {columns.map((c, idx) => (
          <th key={idx} className={clsx('border border-[#444] p-0 font-bold', c.width)}>{c.label}</th>
        ))}
      </tr>
    </thead>
    <tbody>
      {rows.map((row, idx) => (
        <tr key={idx} className="odd:h-[11px] even:h-[10px]">
          <td className="border border-[#444] bg-[#f0f0f0] p-0">
            {idx === 0 && <Icon name="next" className="mx-auto h-[7px] w-[7px]" />}
          </td>
          {row.map((cell, i) => (
            <td
              key={i}
              className={clsx(
                'overflow-hidden whitespace-nowrap border border-[#8a8a8a] px-[2px] py-0',
                columns[i].right && 'text-right',
                idx === 0 && i === 0 && 'outline outline-1 -outline-offset-1 outline-black',
              )}
            >
              {cell}
            </td>
          ))}
        </tr>
      ))}
    </tbody>
  </table>
);

const leftColumns: Column[] = [
  { label: 'FID', width: 'w-[32px]', right: true },
  { label: 'Shape *', width: 'w-[57px]' },
  { label: 'YSDM', width: 'w-[63px]' },
  { label: 'ZDDM', width: 'w-[120px]' },
  { label: '', width: 'w-[120px]' },
];
const leftRows = [28, 27, 26, 25, 24, 23, 22].map((n, i) => [`${i}`, '面', '6001010000', `410811204009JC000${n}`, `410811204009JC000${n}`]);

const rightColumns: Column[] = [
  { label: 'FID', width: 'w-[31px]', right: true },
  { label: 'Shape *', width: 'w-[57px]' },
  { label: 'YSDM', width: 'w-[63px]' },
  { label: 'DJZQDM', width: 'w-[76px]' },
  { label: 'DJZQMC', width: 'w-[50px]' },
  { label: 'QXDM', width: 'w-[39px]' },
  { label: 'BSM', width: 'w-[32px]', right: true },
];
const rightRows = ['410821202229', '410821202227', '410823203225', '410823203226', '410821202223', '410821202225', '410821202226', '410821202228'].map(
  (code, i) => [`${i}`, '面', '1003000000', code, '', code.slice(0, 6), `${i}`],
);

const VScroll = ({ thumb }: { thumb: string }) => (
  <div className="flex w-[12px] shrink-0 flex-col items-center bg-[#f0f0f0]">
    <button aria-label="up" className="flex h-3 items-center"><Icon name="up" className="h-2 w-2" /></button>
    <div className="min-h-0 w-full flex-1 px-px"><div className={clsx('w-full bg-[#cdcdcd]', thumb)} /></div>
    <button aria-label="down" className="flex h-3 items-center"><Icon name="down" className="h-2 w-2" /></button>
  </div>
);

const RecordNav = ({ label, total }: { label: string; total: string }) => (
  <div className="flex h-5 shrink-0 items-center gap-[4px] bg-[#f4f4f4] px-[5px] text-[9px]">
    <Icon name="first" className="mx-[2px] h-[8px] w-[8px]" />
    <Icon name="prev" className="mx-[2px] h-[8px] w-[8px]" />
    <input aria-label={label} defaultValue="1" className="h-4 w-[38px] bg-white text-right outline-none" />
    <Icon name="next" className="mx-[2px] h-[8px] w-[8px]" />
    <Icon name="last" className="mx-[2px] h-[8px] w-[8px]" />
    <button aria-label="all records" className="flex h-4 w-4 items-center justify-center border border-[#5aa3e0] bg-[#cfe5f8]"><Icon name="allrec" className="h-[11px] w-[11px]" /></button>
    <button aria-label="selected records"><Icon name="selrec" className="h-[11px] w-[11px]" /></button>
    <span className="ml-[4px] whitespace-nowrap">{total}</span>
  </div>
);

const PanelHead = ({ title, className }: { title: string; className?: string }) => (
  <div className={clsx('flex h-4 shrink-0 items-center gap-[5px] pl-[3px] pr-px text-[9px] text-[#1c2733]', className)}>
    <span className="flex-1">{title}</span>
    <button aria-label="pin"><Icon name="pin" className="h-[7px] w-[7px]" /></button>
    <button aria-label="close"><Icon name="close" className="h-[8px] w-[8px]" /></button>
  </div>
);

const Contents = () => (
  <aside className="flex w-[127px] shrink-0 flex-col">
    <PanelHead title="内容列表" className="bg-[#cddae7]" />
    <div className="flex h-[18px] shrink-0 items-center bg-[#f7f8fa] px-[3px]">
      <Tools items="*listOrder listSource listVis listSel | options" />
    </div>
    <div className="min-h-0 flex-1 border border-[#8e98a3] bg-white px-[4px] py-px text-[9px] leading-[14px]">
      <div className="flex items-center gap-[5px] pl-px font-bold"><Minus /><Icon name="layers" className="h-[11px] w-[11px]" />图层</div>
      <LayerRow name="410811ZJD" />
      <div className="flex h-[14px] items-center pl-[37px]"><span className="h-[8px] w-[11px] border border-[#7c8f7c] bg-[#c6f5be]" /></div>
      <LayerRow name="410811DJZQ" selected />
      <div className="flex h-[14px] items-center pl-[37px]"><span className="h-[8px] w-[11px] border border-[#7c8799] bg-[#c3d5ee]" /></div>
    </div>
    <div className="flex h-[15px] shrink-0 items-start px-px text-[9px] text-[#888]">
      <DockTab icon="results" label="结果" />
      <DockTab icon="toolbox" label="Arc..." />
      <DockTab icon="contents" label="内容..." active />
    </div>
  </aside>
);

const Minus = () => (
  <svg viewBox="0 0 7 7" className="h-[7px] w-[7px] shrink-0"><path d="M.5.5h6v6h-6zM2 3.500h3" fill="#fff" stroke="#aaa" /></svg>
);

const LayerRow = ({ name, selected }: { name: string; selected?: boolean }) => (
  <label className="flex h-[14px] items-center gap-[4px] pl-[15px]">
    <Minus />
    <input
      type="checkbox"
      defaultChecked
      className="h-[9px] w-[9px] appearance-none border border-[#222] bg-white text-[8px] leading-[7px] before:block before:font-['DejaVu_Sans'] before:font-bold before:text-black before:content-['✓']"
    />
    <span className={clsx('px-px leading-[13px]', selected && 'bg-[#0078d7] text-white')}>{name}</span>
  </label>
);

const DockTab = ({ icon, label, active }: { icon: string; label?: string; active?: boolean }) => (
  <button className={clsx('flex h-[14px] shrink-0 items-center gap-[2px] whitespace-nowrap rounded-b-[2px] border border-t-0 border-[#c0c0c0] px-[3px]', active ? 'bg-white text-[#222]' : 'bg-[#ececec]')}>
    <Icon name={icon} className="h-[10px] w-[10px]" />
    {label}
  </button>
);

const SearchPane = () => (
  <aside className="flex w-[155px] shrink-0 flex-col bg-white">
    <PanelHead title="搜索" className="bg-[#cddae7]" />
    <div className="flex h-[19px] shrink-0 items-center bg-[#f5f6f7] pl-[2px]">
      <Tools items="back fwd | home refresh | options v" />
      <div className="relative ml-[6px] flex-1">
        <select aria-label="搜索位置" className="h-4 w-full appearance-none border border-[#b5b5b5] bg-[#e4e4e4] pl-[2px] text-[9px]">
          <option>本地搜索</option>
        </select>
        <Icon name="down" className="pointer-events-none absolute right-[2px] top-[5px] h-[7px] w-[7px]" />
      </div>
    </div>
    <div className="border-b border-[#c9c9c9] px-[8px] pb-[8px] pt-[5px]">
      <nav className="flex gap-[12px] text-[7px] leading-[10px]">
        <b>全部</b>
        {['地图', '数据', '工具', '图像'].map((t) => (
          <a key={t} href="#" className="text-[#1271c8] underline">{t}</a>
        ))}
      </nav>
      <div className="mt-[4px] flex items-center gap-[7px]">
        <input aria-label="搜索" className="h-4 w-[110px] border border-[#777] bg-white outline-none" />
        <button aria-label="search" className="flex h-[15px] w-[15px] items-center justify-center rounded-full border border-[#a9cde6] bg-[#def0fa]"><Icon name="search" className="h-[9px] w-[9px]" /></button>
      </div>
      <a href="#" className="mt-[3px] flex items-center gap-[3px] text-[7px] leading-[10px] text-[#1271c8]"><span className="underline">任何范围</span><Caret /></a>
    </div>
    <div className="flex-1" />
    <div className="flex h-[15px] shrink-0 justify-end gap-[2px] bg-[#f0f0f0] pr-[2px] text-[9px] text-[#888]">
      <DockTab icon="model" />
      <DockTab icon="table" />
      <DockTab icon="catalog" label="目" />
      <DockTab icon="contents" />
      <DockTab icon="create" label="创." />
    </div>
  </aside>
);

const TableDock = () => (
  <section className="mt-[5px] shrink-0">
    <PanelHead title="表 - 410811DJZQ" className="h-[15px] bg-[#a9c1dd]" />
    <div className="flex h-[19px] items-center bg-[#f6f7f8] pl-[3px]">
      <Tools items="options v | related v | selby swsel clearsel gZoomSel del" />
    </div>
    <div className="grid h-[132px] grid-cols-[370fr_418fr] gap-1">
      <div className="flex min-w-0 flex-col bg-[#f0f0f0]">
        <div className="flex h-[15px] shrink-0 items-center justify-between bg-[#c9d7e5] pl-[3px] pr-px text-[9px]">
          410811ZJD<button aria-label="close"><Icon name="close" className="h-[8px] w-[8px]" /></button>
        </div>
        <div className="flex min-h-0 flex-1 border-l-2 border-t-2 border-[#777]">
          <div className="min-w-0 flex-1 overflow-hidden"><RecordTable name="410811ZJD" columns={leftColumns} rows={leftRows} /></div>
          <VScroll thumb="h-3" />
        </div>
        <div className="flex h-[11px] shrink-0 items-center gap-[2px] pl-[3px] pr-4">
          <Icon name="left" className="h-2 w-2" />
          <div className="h-full flex-1"><div className="h-full w-[53px] bg-[#cdcdcd]" /></div>
          <Icon name="right" className="h-2 w-2" />
        </div>
        <RecordNav label="410811ZJD 当前记录" total="(0 / 40992 已选择)" />
      </div>
      <div className="flex min-w-0 flex-col bg-[#f0f0f0]">
        <div className="flex h-[15px] shrink-0 items-center justify-between bg-[#a9c1dd] pl-[3px] pr-px text-[9px]">
          410811DJZQ<button aria-label="close"><Icon name="close" className="h-[8px] w-[8px]" /></button>
        </div>
        <div className="flex min-h-0 flex-1 border-l-2 border-t-2 border-[#777]">
          <div className="min-w-0 flex-1 overflow-hidden"><RecordTable name="410811DJZQ" columns={rightColumns} rows={rightRows} /></div>
          <VScroll thumb="h-3" />
        </div>
        <RecordNav label="410811DJZQ 当前记录" total="(0 / 104 已选择)" />
      </div>
    </div>
    <div className="grid h-4 grid-cols-[370fr_418fr] gap-1 text-[9px] leading-[12px]">
      <div className="pl-px"><button className="h-[15px] rounded-b-[2px] border border-t-0 border-[#c0c0c0] bg-white px-[4px]">410811ZJD</button></div>
      <div><button className="h-[15px] rounded-b-[2px] border border-t-0 border-[#aaa] bg-white px-[2px]"><span className="border border-dotted border-[#999]">410811DJZQ</span></button></div>
    </div>
  </section>
);

const taskIcons: { name: string; draw: ReactNode; open?: boolean; active?: boolean }[] = [
  { name: 'Start', draw: <path d="M2 4l6-1v6H2zM9 3l6-1v7H9zM2 10h6v6l-6-1zM9 10h6v7l-6-1z" fill="#fff" /> },
  { name: 'Search', draw: <><circle cx="10" cy="7" r="4.500" fill="none" stroke="#eee" strokeWidth="1.300" /><path d="M7 10l-5 6" stroke="#eee" strokeWidth="1.300" /></> },
  { name: 'Edge', draw: <path d="M2 8C3 3 6 1 9 1c5 0 7 4 7 9H7c0 4 5 5 8 3v3C9 19 3 17 3 11c0-3 2-5 5-6-1 1-1 2-1 3h5c0-5-7-5-10 0z" fill="#1683dc" /> },
  { name: 'Explorer', draw: <><path d="M1 3h6l1 2h9v11H1z" fill="#f2c14b" /><path d="M1 7h16v9H1z" fill="#fbdf85" /><path d="M4 16v-5h10v5h-3v-2H7v2z" fill="#3f9fd9" /></> },
  { name: 'PyCharm', open: true, draw: <><path d="M1 1h16v16H1z" fill="#27d189" /><path d="M1 1h8v16H1z" fill="#9be15a" /><path d="M3 3h12v12H3z" fill="#111" /><text x="4" y="10" fontSize="7" fontWeight="700" fill="#fff">PC</text><path d="M5 13h4" stroke="#fff" /></> },
  { name: 'Chrome', open: true, draw: <><circle cx="9" cy="9" r="8" fill="#f8c81c" /><path d="M9 9L2 5a8 8 0 0 1 14 0z" fill="#df4434" /><path d="M9 9L2 5a8 8 0 0 0 6 12z" fill="#28a252" /><circle cx="9" cy="9" r="3.800" fill="#fff" /><circle cx="9" cy="9" r="3" fill="#4285f4" /></> },
  { name: 'Norton', open: true, draw: <><path d="M1 1h16v16H1z" fill="#3e444b" /><circle cx="9" cy="9.500" r="5.500" fill="none" stroke="#f2b63a" strokeWidth="1.600" /><path d="M6 8l3 4 6-9" fill="none" stroke="#fff" strokeWidth="2" /></> },
  { name: 'ArcMap', open: true, active: true, draw: <><circle cx="9" cy="8.500" r="7.500" fill="#2a80b5" /><path d="M4 3c5-2 7 1 5 4s-4 2-3 7C2 12 1 7 4 3" fill="#57a85a" /><circle cx="9" cy="7" r="4" fill="#a4d7ef" fillOpacity=".7" stroke="#e5f2f8" /><path d="M12 10l5 6" stroke="#c8a24a" strokeWidth="2" /></> },
];

const Taskbar = () => (
  <footer className="flex h-7 shrink-0 bg-[#101012] text-[9px] text-white">
    {taskIcons.map((t) => (
      <button
        key={t.name}
        aria-label={t.name}
        className={clsx('mr-px flex w-[34px] items-center justify-center border-b-2', t.open ? 'border-[#6cb2ea]' : 'border-transparent', t.active && 'bg-[#38393b]')}
      >
        <svg viewBox="0 0 18 18" className={clsx(t.name === 'Start' || t.name === 'Search' ? 'h-[13px] w-[13px]' : 'h-4 w-4')}>{t.draw}</svg>
      </button>
    ))}
    <div className="ml-auto flex items-center gap-[6px] pr-4">
      <svg viewBox="0 0 90 16" className="h-4 w-[90px]" aria-hidden="true">
        <path d="M1 9l3-3 3 3" fill="none" stroke="#ddd" />
        <path d="M12 4h10v8H12zM15 7h8" fill="none" stroke="#eee" /><circle cx="24" cy="13" r="3" fill="#f08c1c" />
        <rect x="31" y="3" width="10" height="9" rx="2" fill="#1b8fe8" /><path d="M33 7l3 2 4-4" stroke="#fff" fill="none" />
        <path d="M49 5h11v7H49zM60 7h2v3h-2z" fill="#eee" />
        <path d="M67 12a8 8 0 0 1 8-8M69 12a5 5 0 0 1 6-5M72 12a3 3 0 0 1 3-2" stroke="#aaa" fill="none" />
        <path d="M81 7h2l3-3v9l-3-3h-2zM88 6v5" stroke="#ddd" fill="none" />
      </svg>
      <span className="text-[11px]">英</span>
      <div className="text-center text-[9px] leading-[12px]">21:22<br />2020/12/12</div>
      <svg viewBox="0 0 14 14" className="ml-[5px] h-[13px] w-[13px]"><path d="M1 2h12v8H9l-2 3v-3H1z" fill="none" stroke="#ddd" /></svg>
    </div>
  </footer>
);

const Watermark = () => (
  <div className="pointer-events-none absolute bottom-2 right-[11px] flex flex-col items-end">
    <div className="mr-[24px] flex items-center gap-[6px]">
      <svg viewBox="0 0 44 34" className="h-[34px] w-[44px]" aria-hidden="true">
        <path d="M16 2c8 0 14 5 14 11s-6 11-14 11c-2 0-4 0-5-1l-5 3 1-5C4 19 2 16 2 13 2 7 8 2 16 2z" fill="#fdfdfd" stroke="#999" />
        <path d="M9 9q2-2 4 0M19 9q2-2 4 0" fill="none" stroke="#777" />
        <path d="M30 13c7 0 13 4 13 10 0 3-2 5-4 7l1 4-4-2c-9 3-19-1-19-9 0-6 6-10 13-10z" fill="#fdfdfd" stroke="#999" />
        <path d="M23 19q2-2 4 0M33 19q2-2 4 0" fill="none" stroke="#777" />
      </svg>
      <span className="whitespace-nowrap text-[27px] leading-[34px] text-white/90 [text-shadow:1px_1px_0_#888]">还是学习吧</span>
    </div>
    <span className="mt-1 font-['Roboto',sans-serif] text-[15px] leading-[20px] text-[#d5d5d5]/90">https://blog.csdn.net/gislittlestudent</span>
  </div>
);

const App = () => (
  <div className="relative flex h-screen flex-col overflow-hidden bg-[#f0f0f0] font-['Noto_Sans','Noto_Sans_CJK_SC',sans-serif] text-[9px] text-[#222]">
    <header className="flex h-4 shrink-0 items-center bg-white pl-px pr-[14px]">
      <svg viewBox="0 0 16 16" className="mr-[2px] h-[12px] w-[12px]"><circle cx="7" cy="8" r="7" fill="#1d6f96" /><path d="M3 4c4-3 6 0 5 3s-4 1-3 5c-4-2-4-6-2-8" fill="#4fa364" /><circle cx="9" cy="7" r="3.500" fill="#bfe6f0" stroke="#274a5c" /><path d="M12 10l4 5" stroke="#222" strokeWidth="2.500" /></svg>
      <h1 className="flex-1 text-[9px]">无标题 - ArcMap</h1>
      <div className="flex gap-[25px]">
        {['min', 'max', 'thinClose'].map((n) => <button key={n} aria-label={n}><Icon name={n} className="h-[8px] w-[8px]" /></button>)}
      </div>
    </header>

    <nav className="flex h-5 shrink-0 items-center gap-[10px] bg-[#f7f8f8] pl-[8px]">
      {menus.map((m) => <button key={m} className="whitespace-nowrap">{m}</button>)}
    </nav>

    <div className="flex h-[18px] shrink-0 items-center bg-[#f7f8f8] pl-[3px]">
      <Grip />
      <Tools items="new open save print | cut copy paste del | undo redo | add v |" />
      <div className="relative mr-1 w-[103px] shrink-0">
        <select aria-label="地图比例" className="h-[14px] w-full appearance-none border border-[#888] bg-white pl-px font-['Liberation_Mono',monospace] text-[7px]">
          <option>1:125,000</option>
        </select>
        <Icon name="down" className="pointer-events-none absolute right-[2px] top-[4px] h-[7px] w-[7px]" />
      </div>
      <Tools items="*edit | table catalog find toolbox python | model" />
      <More />
      <div className="ml-[5px] flex items-center self-stretch">
        <Grip />
        <button className="ml-[2px] flex items-center gap-[2px] whitespace-nowrap"><span><b>编辑器</b>(R)</span><Caret /></button>
        <Tools items="| gTri gTriA | gLine gArc gTrap v gStar | gReshape gCutp gSplit gSlash gRotate | gGrid gMount | gForm" />
        <More />
      </div>
    </div>

    <div className="flex h-[19px] shrink-0 items-center bg-[#f7f8f8] pl-[3px]">
      <Grip />
      <Tools items="zoomin zoomout *pan globe | shrink grow | back fwd | selfeat v clearsel | pointer info flash popup | measure | binoc route xy | clock | viewer" />
      <More />
      <div className="ml-[124px] flex items-center self-stretch">
        <Grip />
        <Tools items="gBoxLine gCorner gExt gPlus gBranch | gDots gBall | gExt gCurl gPoly gBoxes gTiles | gUnion gUnion" />
        <More />
      </div>
      <div className="ml-4 flex items-center self-stretch">
        <Grip />
        <button className="ml-[2px] mr-px flex items-center gap-[2px] whitespace-nowrap">捕捉(S)<Caret /></button>
        <Tools items="*sCircle *sGrid *sBox *sEdge" />
        <More />
      </div>
      <div className="ml-[4px] flex items-center self-stretch">
        <Grip />
        <Tools items="gHouse | gTopo v | gBoxes gTopo gExt gCorner | gBoxes | gPoly gCheck | gZoomSel gForm" />
        <More />
      </div>
    </div>

    <main className="flex min-h-0 flex-1">
      <Contents />
      <div className="mx-[3px] flex min-w-0 flex-1 flex-col">
        <div className="flex min-h-0 flex-1 border-l-2 border-t-2 border-[#888] bg-white">
          <div className="min-h-0 min-w-0 flex-1"><ParcelMap /></div>
          <VScroll thumb="mt-2 h-[92%]" />
        </div>
        <div className="flex h-[11px] shrink-0 items-center gap-[3px] pl-[3px] pr-[13px]">
          <span className="bg-[#cfe5f8] px-px"><Icon name="dataview" className="h-[8px] w-[8px]" /></span>
          <Icon name="layoutview" className="h-[8px] w-[8px]" />
          <Sep />
          <Icon name="refresh" className="h-[8px] w-[8px]" />
          <Icon name="pause" className="h-[8px] w-[8px]" />
          <Icon name="left" className="h-[8px] w-[8px]" />
          <div className="h-full flex-1 bg-[#cdcdcd]" />
          <Icon name="right" className="h-[8px] w-[8px]" />
        </div>
        <TableDock />
      </div>
      <SearchPane />
    </main>

    <div className="flex h-4 shrink-0 items-center justify-end gap-2 pr-[83px] text-[#444]">
      <span>439756.421</span>
      <span>3894355.198 米</span>
    </div>
    <Taskbar />
    <Watermark />
  </div>
);

export default App;
